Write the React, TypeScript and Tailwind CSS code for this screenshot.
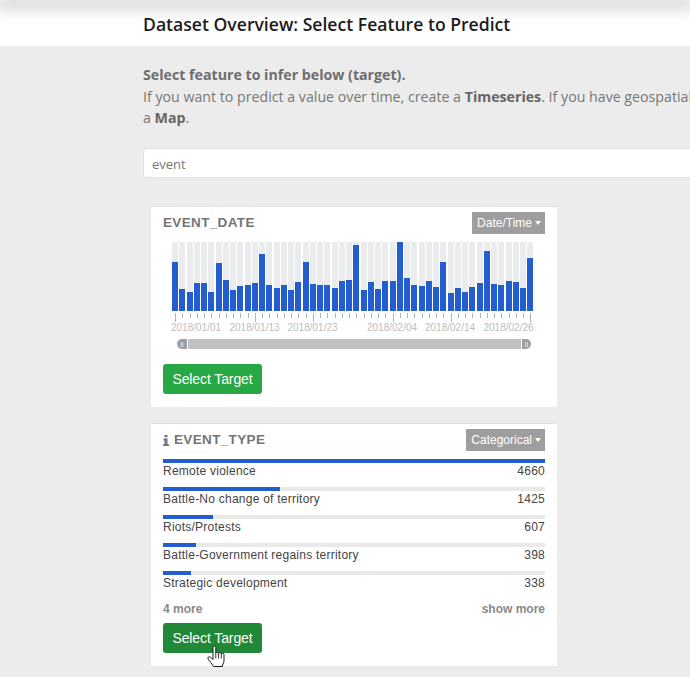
const BARS = [
  49, 22, 19, 28, 28, 19, 48, 31, 21, 25, 26, 28, 57, 26, 23, 26, 21, 29, 49, 27, 26, 26, 23, 30, 31,
  66, 21, 29, 22, 30, 30, 69, 33, 26, 25, 30, 24, 49, 18, 23, 19, 24, 28, 60, 27, 26, 30, 29, 23, 53,
];
const LONG_TICKS = [0, 11, 19, 30, 38, 49];
const LABELS = [
  { text: "2018/01/01", ml: "ml-0" },
  { text: "2018/01/13", ml: "ml-[8.5px]" },
  { text: "2018/01/23", ml: "ml-[8px]" },
  { text: "2018/02/04", ml: "ml-[29.5px]" },
  { text: "2018/02/14", ml: "ml-[8px]" },
  { text: "2018/02/26", ml: "ml-[8.5px]" },
];
const ROWS = [
  { name: "Remote violence", count: 4660, pct: 100 },
  { name: "Battle-No change of territory", count: 1425, pct: 30.6 },
  { name: "Riots/Protests", count: 607, pct: 13 },
  { name: "Battle-Government regains territory", count: 398, pct: 8.6 },
  { name: "Strategic development", count: 338, pct: 7.3 },
];

function TypeTag({ label }: { label: string }) {
  return (
    <span className="flex h-[22px] items-center gap-[3px] bg-[#9e9e9e] pl-[5px] pr-[4px] text-[12px] text-white">
      {label}
      <span className="mt-[-1px] h-0 w-0 border-x-[3px] border-t-[4px] border-x-transparent border-t-white" />
    </span>
  );
}

function SelectButton({ dark }: { dark?: boolean }) {
  return (
    <button
      type="button"
      className={`h-[30px] w-[99px] rounded-[3px] text-[14px] tracking-[-0.1px] text-white ${dark ? "bg-[#218838]" : "bg-[#28a745]"}`}
    >
      Select Target
    </button>
  );
}

function HandCursor() {
  return (
    <svg width="18" height="22" viewBox="0 0 18 22" className="ml-[44px] mt-[-8px] h-[22px] w-[18px] self-start overflow-visible">
      <path
        d="M6 2.200c0-1.600 2.800-1.600 2.800 0V8c0-1 2.800-1 2.800.3 0-1 2.700-.9 2.700.5.1-.9 2.700-.7 2.700.7v5.500c0 2.500-.7 3.500-1.500 5v1.500H6.500c-1.500-2.500-3.500-5-5.300-7.300-1.200-1.700.8-3.200 2.300-2L6 14.500z"
        fill="#fff"
        stroke="#1c1c1c"
        strokeWidth="1"
        strokeLinejoin="round"
      />
      <path d="M8.800 8v5.500M11.600 8.300v5.200M14.300 8.800v4.700" stroke="#1c1c1c" strokeWidth="0.9" />
    </svg>
  );
}

function DateCard() {
  return (
    <section className="flex h-[201px] w-[406px] flex-col border-t border-[#e0e0e0] bg-white px-3 pt-[5px]">
      <div className="flex items-center justify-between">
        <h3 className="text-[13.5px] font-bold tracking-[0.35px] text-[#757575]">EVENT_DATE</h3>
        <TypeTag label="Date/Time" />
      </div>
      <div className="ml-[9px] mt-[8px] flex h-[69px] w-[361px] gap-[1.2px]">
        {BARS.map((h, i) => (
          <div key={i} className="flex flex-1 flex-col justify-end bg-[#e9ebed]">
            <div className="bg-[#245dcf]" style={{ height: h }} />
          </div>
        ))}
      </div>
      <div className="ml-[9px] mt-[2px] flex h-[10px] w-[361px] gap-[1.2px]">
        {BARS.map((_, i) => (
          <div key={i} className="flex-1">
            <div className={`ml-[3px] w-px bg-[#b5b5b5] ${LONG_TICKS.includes(i) ? "h-[9px]" : "h-[5px]"}`} />
          </div>
        ))}
      </div>
      <div className="ml-[8px] mt-[-1px] flex text-[10px] leading-[12px] text-[#bdbdbd]">
        {LABELS.map((l) => (
          <span key={l.text} className={`w-[50px] whitespace-nowrap ${l.ml}`}>
            {l.text}
          </span>
        ))}
      </div>
      <div className="ml-[14px] mt-[5px] flex h-[10px] w-[354px] items-center gap-px">
        <span className="flex h-[10px] w-[10px] items-center justify-center rounded-l-full bg-[#9f9f9f] text-[6px] leading-none text-white">
          ||
        </span>
        <div className="h-[10px] flex-1 bg-[#c0c1c2]" />
        <span className="flex h-[10px] w-[9px] items-center justify-center rounded-r-full bg-[#9f9f9f] text-[6px] leading-none text-white">
          ||
        </span>
      </div>
      <div className="mt-[15px]">
        <SelectButton />
      </div>
    </section>
  );
}

function TypeCard() {
  return (
    <section className="mt-[16px] flex h-[243px] w-[406px] flex-col border-t border-[#e0e0e0] bg-white px-3 pt-[5px]">
      <div className="flex items-center justify-between">
        <h3 className="flex items-center gap-[5px] text-[13.5px] font-bold tracking-[0.35px] text-[#757575]">
          <svg width="6" height="11" viewBox="0 0 6 11" className="h-[11px] w-[6px]">
            <path d="M1.500 0h3v2.200h-3zM.5 3.600h4v5.600H6V11H0V9.200h1.500V5.400H.5z" fill="#757575" />
          </svg>
          EVENT_TYPE
        </h3>
        <TypeTag label="Categorical" />
      </div>
      <div className="mt-[8px] flex flex-col gap-[8px]">
        {ROWS.map((r) => (
          <div key={r.name} className="flex flex-col">
            <div className="h-[4px] w-full bg-[#e9e9e9]">
              <div className="h-full bg-[#245dcf]" style={{ width: `${r.pct}%` }} />
            </div>
            <div className="flex h-[16px] items-center justify-between text-[12px] tracking-[0.24px] text-[#444]">
              <span>{r.name}</span>
              <span>{r.count}</span>
            </div>
          </div>
        ))}
      </div>
      <div className="mt-[9px] flex justify-between text-[12px] font-bold text-[#8a8a8a]">
        <span>4 more</span>
        <span>show more</span>
      </div>
      <div className="mt-[5px] flex flex-col">
        <SelectButton dark />
        <HandCursor />
      </div>
    </section>
  );
}

export default function App() {
  return (
    <div className="h-[677px] w-[690px] overflow-hidden bg-[#ececec] font-['Liberation_Sans',sans-serif]">
      <header className="h-[46px] bg-white">
        <div className="h-0 w-full shadow-[0_3px_16px_4px_rgba(0,0,0,0.28)]" />
        <h1 className="pl-[143px] pt-[12px] font-['Open_Sans',sans-serif] text-[17.6px] font-semibold leading-6 whitespace-nowrap text-[#1c1c1c]">
          Dataset Overview: Select Feature to Predict
        </h1>
      </header>
      <main className="pl-[143px] pt-[18px]">
        <div className="w-[800px] font-['Open_Sans',sans-serif] text-[14.2px] leading-[21.5px] text-[#777]">
          <p className="font-bold text-[#6e6e6e]">Select feature to infer below (target).</p>
          <p>
            If you want to predict a value over time, create a <b className="text-[#666]">Timeseries</b>. If you have
            geospatial data, create
            <br />a <b className="text-[#666]">Map</b>.
          </p>
        </div>
        <input
          readOnly
          value="event"
          className="mt-[19.5px] h-[30px] w-[800px] rounded-[4px] border border-[#e0e0e0] bg-white px-[8px] pt-[1px] font-['Open_Sans',sans-serif] text-[13px] text-[#777] outline-none"
        />
        <div className="mt-[28px] ml-[8px] flex flex-col">
          <DateCard />
          <TypeCard />
        </div>
      </main>
    </div>
  );
}
